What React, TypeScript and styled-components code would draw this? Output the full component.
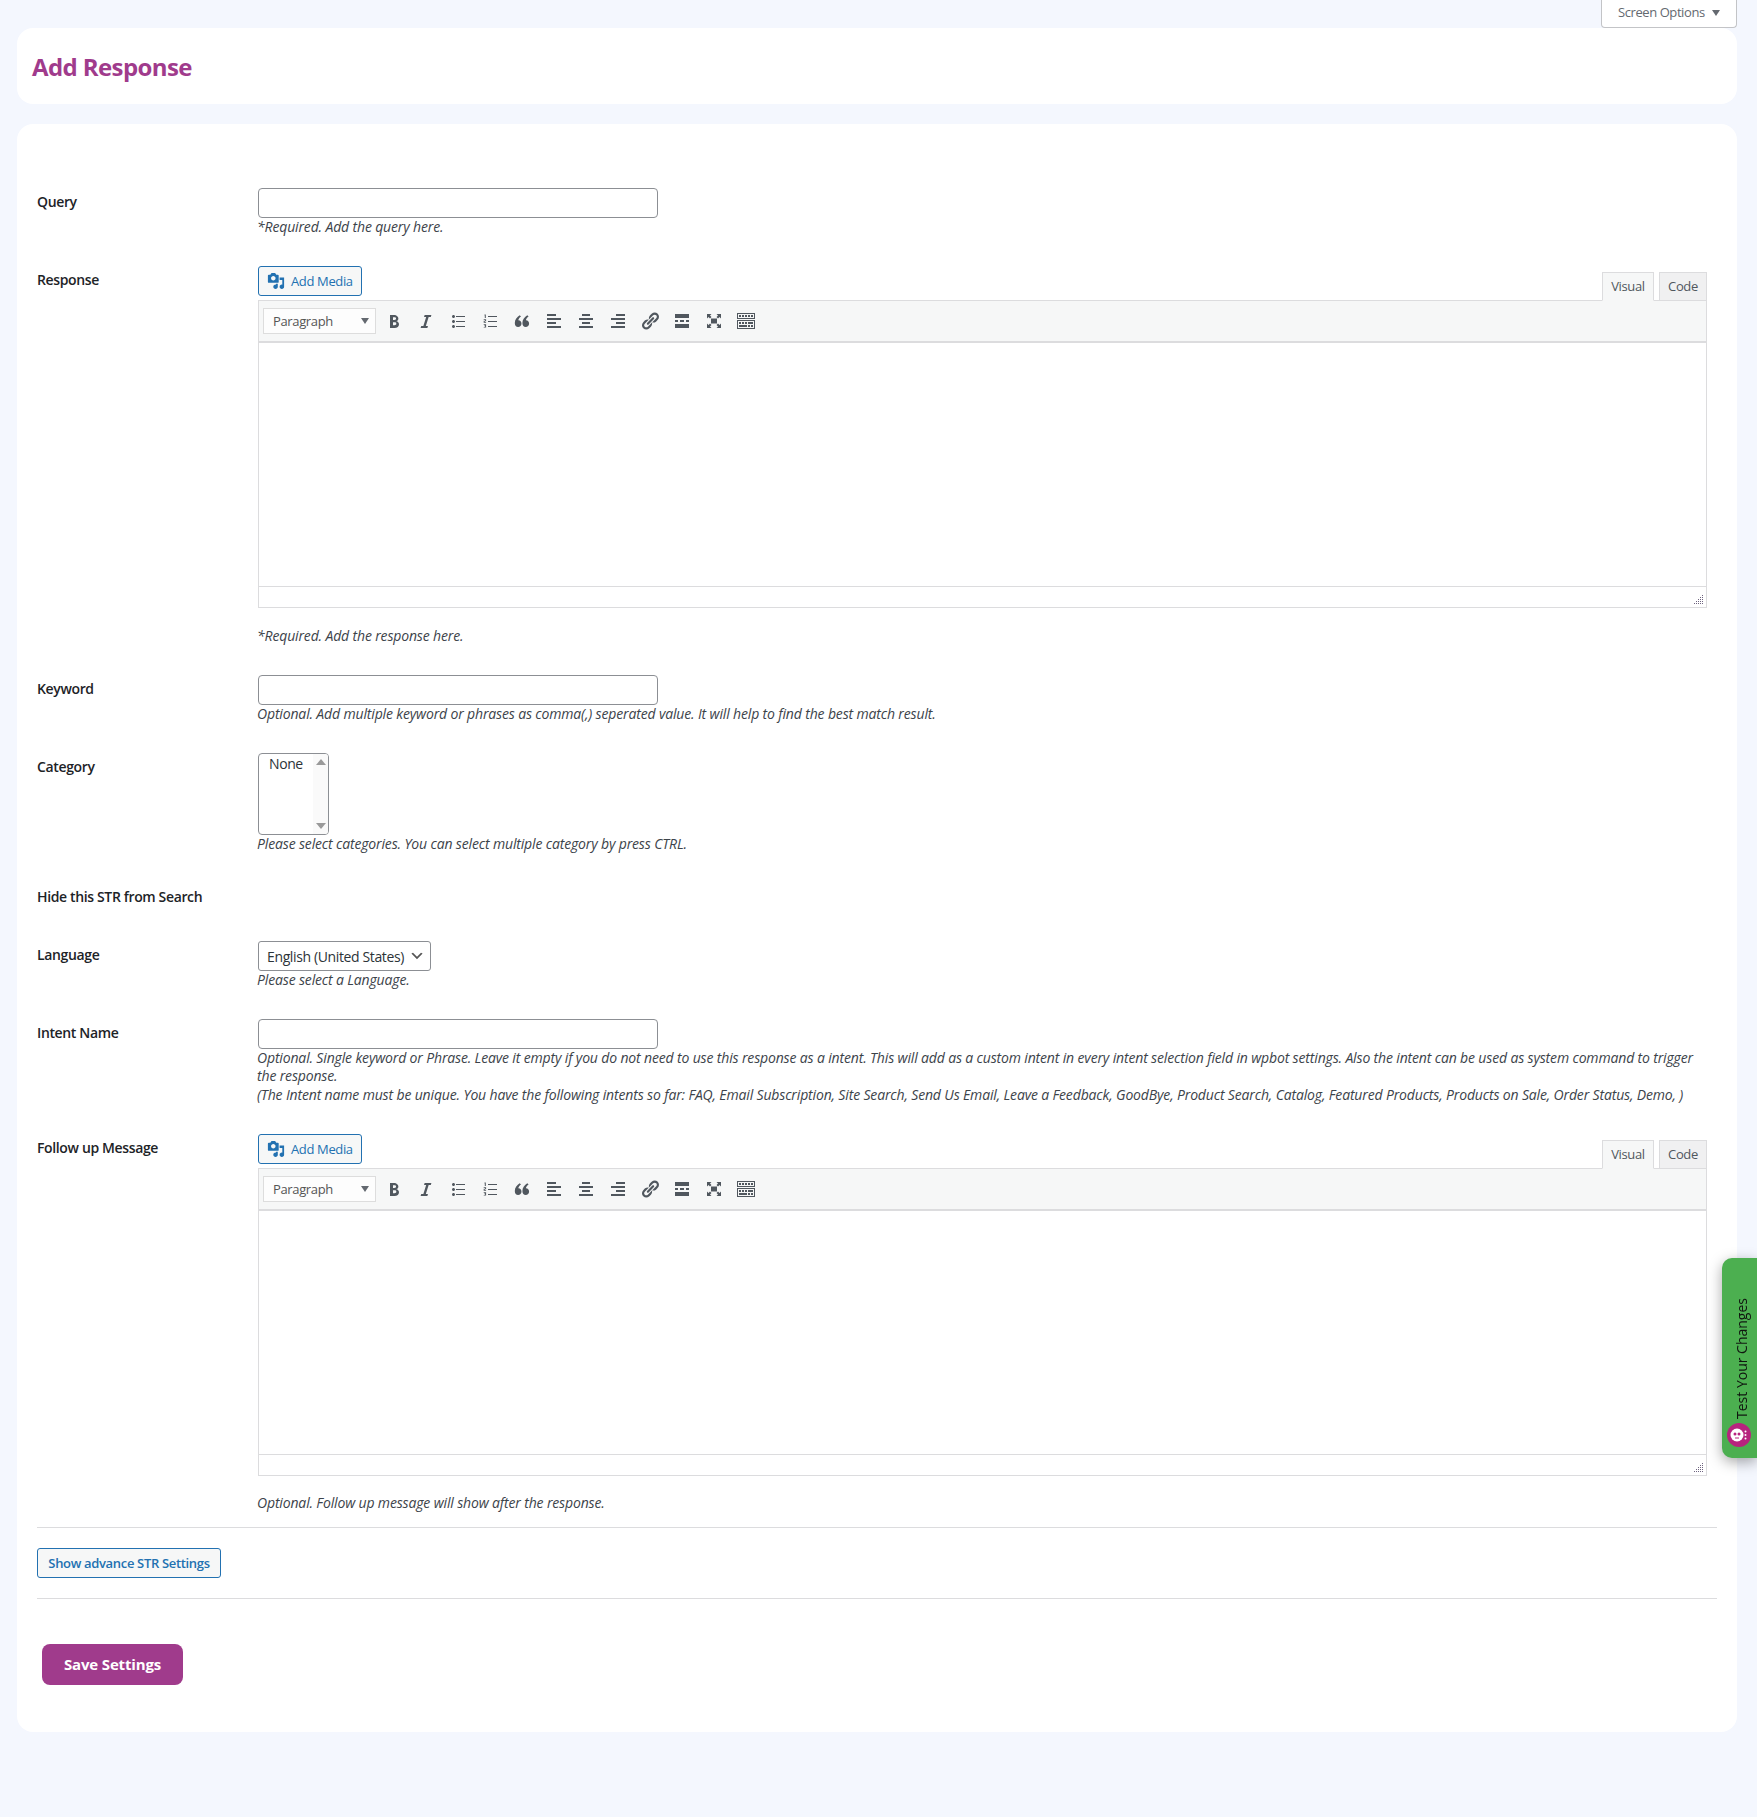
import React from 'react';
import styled, { createGlobalStyle } from 'styled-components';

const uiFont = `"Open Sans", "Noto Sans", sans-serif`;

const GlobalStyle = createGlobalStyle`
  html, body {
    margin: 0;
    background: #f4f7fe;
  }
  body {
    font-family: ${uiFont};
    font-size: 13px;
    line-height: 1.4;
    color: #3c434a;
  }
  * {
    box-sizing: border-box;
  }
`;

const Page = styled.div`
  position: relative;
  min-height: 1817px;
  padding: 0 20px 85px 17px;
  overflow: hidden;
`;

const TopBar = styled.div`
  display: flex;
  justify-content: flex-end;
  height: 28px;
`;

const ScreenOptions = styled.button`
  position: relative;
  z-index: 1;
  display: flex;
  align-items: center;
  gap: 7px;
  width: 136px;
  height: 28px;
  padding: 0 0 2px 16px;
  border: 1px solid #c3c4c7;
  border-top: 0;
  border-radius: 0 0 4px 4px;
  background: #fff;
  color: #646970;
  font: 13px/1 ${uiFont};
  letter-spacing: -0.42px;
`;

const DownArrow = styled.span`
  width: 0;
  height: 0;
  border-left: 4px solid transparent;
  border-right: 4px solid transparent;
  border-top: 6px solid #646970;
`;

const TitleCard = styled.div`
  height: 76px;
  padding: 2px 15px 0;
  display: flex;
  align-items: center;
  background: #fff;
  border-radius: 16px;
`;

const Title = styled.h1`
  margin: 0;
  color: #a03b8c;
  font: 700 24px/1.2 ${uiFont};
  letter-spacing: -0.6px;
`;

const FormCard = styled.div`
  margin-top: 20px;
  padding: 49px 20px 47px;
  background: #fff;
  border-radius: 16px;
`;

const Row = styled.div`
  display: grid;
  grid-template-columns: 221px 1fr;
`;

const Label = styled.div`
  padding: 20px 0;
  color: #1d2327;
  font-size: 14px;
  font-weight: 600;
  line-height: 18px;
  letter-spacing: -0.36px;
`;

const Field = styled.div`
  padding: 15px 10px 15px 0;
  min-width: 0;
`;

const TextInput = styled.input`
  display: block;
  width: 400px;
  height: 30px;
  border: 1px solid #8c8f94;
  border-radius: 4px;
  background: #fff;
`;

const Help = styled.div<{ $gap?: number; $leading?: number }>`
  margin-top: ${p => p.$gap ?? 0}px;
  margin-left: -1px;
  font-size: 14px;
  font-style: italic;
  line-height: ${p => p.$leading ?? 18}px;
  letter-spacing: -0.15px;
  color: #3c434a;
`;

const EditorHead = styled.div`
  display: flex;
  justify-content: space-between;
  align-items: flex-end;
  height: 34px;
`;

const AddMedia = styled.button`
  display: flex;
  align-items: center;
  gap: 6px;
  align-self: flex-start;
  width: 104px;
  height: 30px;
  padding: 0 0 0 8px;
  border: 1px solid #2271b1;
  border-radius: 3px;
  background: #f6f7f7;
  color: #2271b1;
  font: 13px/1 ${uiFont};
  letter-spacing: -0.36px;
  svg {
    flex: none;
    fill: #2271b1;
  }
`;

const Tabs = styled.div`
  display: flex;
  gap: 5px;
  position: relative;
  top: 1px;
`;

const Tab = styled.div<{ $active?: boolean }>`
  display: flex;
  align-items: center;
  justify-content: center;
  width: ${p => (p.$active ? 52 : 48)}px;
  height: 29px;
  border: 1px solid #dcdcde;
  border-bottom-color: ${p => (p.$active ? '#f6f7f7' : '#dcdcde')};
  background: ${p => (p.$active ? '#f6f7f7' : '#f0f0f1')};
  color: #50575e;
  font-size: 13px;
  letter-spacing: -0.36px;
`;

const EditorBox = styled.div`
  border: 1px solid #dcdcde;
  background: #fff;
`;

const Toolbar = styled.div`
  display: flex;
  align-items: center;
  height: 42px;
  padding: 0 0 0 4px;
  background: #f6f7f7;
  border-bottom: 2px solid #dcdcde;
`;

const FormatSelect = styled.div`
  display: flex;
  align-items: center;
  justify-content: space-between;
  width: 113px;
  height: 26px;
  margin-right: 2px;
  padding: 0 6px 0 9px;
  border: 1px solid #dddddd;
  background: #fdfdfd;
  color: #555;
  font-size: 13px;
  letter-spacing: -0.36px;
`;

const ToolButton = styled.div`
  display: flex;
  align-items: center;
  justify-content: center;
  width: 32px;
  height: 30px;
  svg {
    fill: #50575e;
  }
`;

const EditArea = styled.div`
  height: 244px;
  border-bottom: 1px solid #dcdcde;
`;

const StatusBar = styled.div`
  display: flex;
  justify-content: flex-end;
  align-items: flex-end;
  height: 20px;
  padding: 0 3px 3px 0;
`;

const Listbox = styled.div`
  display: flex;
  width: 71px;
  height: 82px;
  border: 1px solid #8c8f94;
  border-radius: 4px;
  overflow: hidden;
  background: #fff;
`;

const ListOptions = styled.div`
  flex: 1;
  padding: 1px 0 0 10px;
  font-size: 14px;
  line-height: 17px;
  letter-spacing: -0.4px;
  color: #2c3338;
`;

const Scrollbar = styled.div`
  display: flex;
  flex-direction: column;
  justify-content: space-between;
  align-items: center;
  width: 15px;
  padding: 5px 0;
  background: #fafafa;
`;

const ScrollArrow = styled.span<{ $up?: boolean }>`
  width: 0;
  height: 0;
  border-left: 5px solid transparent;
  border-right: 5px solid transparent;
  ${p => (p.$up ? 'border-bottom: 6px solid #9a9a9a;' : 'border-top: 6px solid #9a9a9a;')}
`;

const LanguageSelect = styled.select`
  display: block;
  width: 173px;
  height: 30px;
  padding: 0 24px 0 8px;
  border: 1px solid #8c8f94;
  border-radius: 3px;
  appearance: none;
  background: #fff url("data:image/svg+xml,%3Csvg xmlns='http://www.w3.org/2000/svg' width='20' height='20'%3E%3Cpath d='M5 6l5 5 5-5 2 1-7 7-7-7z' fill='%23555'/%3E%3C/svg%3E") no-repeat right 5px top 6px / 16px 16px;
  color: #2c3338;
  font: 14px ${uiFont};
  letter-spacing: -0.37px;
`;

const Divider = styled.hr`
  margin: 0;
  border: 0;
  border-top: 1px solid #dcdcde;
`;

const AdvanceButton = styled.button`
  display: block;
  width: 184px;
  height: 30px;
  margin: 20px 0;
  padding: 0;
  border: 1px solid #2271b1;
  border-radius: 3px;
  background: #f6f7f7;
  color: #2271b1;
  font: 600 13px/1 ${uiFont};
  letter-spacing: -0.33px;
`;

const SaveButton = styled.button`
  display: block;
  width: 141px;
  height: 41px;
  margin: 45px 0 0 5px;
  padding: 0;
  border: 0;
  border-radius: 8px;
  background: #a03b8c;
  color: #fff;
  font: 700 15px/1 ${uiFont};
  letter-spacing: -0.15px;
`;

const TestTab = styled.div`
  position: fixed;
  top: 1258px;
  right: 0;
  display: flex;
  flex-direction: column;
  justify-content: flex-end;
  align-items: flex-start;
  gap: 4px;
  width: 35px;
  height: 200px;
  padding: 0 0 11px 5px;
  background: #4caf50;
  border-radius: 10px 0 0 10px;
  box-shadow: 0 4px 14px rgba(0, 0, 0, 0.35);
`;

const TestLabel = styled.span`
  margin-left: 5px;
  writing-mode: vertical-rl;
  transform: rotate(180deg);
  color: #10150f;
  font-size: 14px;
  line-height: 19px;
  white-space: nowrap;
`;

const Icon = ({ d, size = 20 }: { d: string; size?: number }) => (
  <svg width={size} height={size} viewBox="0 0 20 20" aria-hidden="true">
    <path d={d} />
  </svg>
);

const toolIcons = [
  'M6 4v13h4.54c1.37 0 2.46-.33 3.26-1 .8-.66 1.2-1.58 1.2-2.77 0-.84-.23-1.51-.8-2.01-.4-.49-1-.82-1.76-.98v-.06c.6-.14 1.07-.43 1.41-.87.34-.45.51-1.02.51-1.71 0-1.03-.38-1.82-1.14-2.33C12.48 4.27 11.34 4 9.82 4H6zm3 2.2h1.13c.68 0 1.17.09 1.48.3.3.2.45.53.45.99 0 .49-.14.85-.42 1.08-.28.22-.73.33-1.35.33H9V6.2zm0 5h1.37c.65 0 1.14.12 1.46.37.32.24.49.6.49 1.08 0 .51-.17.89-.5 1.14-.33.25-.82.38-1.47.38H9v-3z',
  'M14.78 6h-2.13l-2.8 9h2.12l-.62 2H4.6l.62-2h2.14l2.8-9H8.03l.62-2h6.75z',
  'M5.5 7C4.67 7 4 6.33 4 5.5 4 4.68 4.67 4 5.5 4 6.32 4 7 4.68 7 5.5 7 6.33 6.32 7 5.5 7zM8 5h9v1H8V5zm-2.5 7c-.83 0-1.5-.67-1.5-1.5C4 9.68 4.67 9 5.5 9c.82 0 1.5.68 1.5 1.5 0 .83-.68 1.5-1.5 1.5zM8 10h9v1H8v-1zm-2.5 7c-.83 0-1.5-.67-1.5-1.5 0-.82.67-1.5 1.5-1.5.82 0 1.5.68 1.5 1.5 0 .83-.68 1.5-1.5 1.5zM8 15h9v1H8v-1z',
  'M8 5h9v1H8V5zm0 5h9v1H8v-1zm0 5h9v1H8v-1zM4.5 3.5h1.3v3.4h-1V4.4h-.3zM3.7 8.2h2.4v2.1H4.7v.6h1.4v.8H3.7V9.7h1.4V9H3.7zM3.7 13.2h2.4v3.4H3.7v-.7h1.4v-.7h-.9v-.6h.9v-.7H3.7z',
  'M9.5 12.5c0-2-1.4-3.4-3.2-3.3.2-1.3 1.2-2.6 2.7-3.7L7.7 4.3C5 6 2.8 8.7 2.8 12c0 2.4 1.3 4 3.3 4 1.9 0 3.4-1.5 3.4-3.5zM17.1 12.5c0-2-1.4-3.4-3.2-3.3.2-1.3 1.2-2.6 2.7-3.7l-1.3-1.2c-2.7 1.7-4.9 4.4-4.9 7.7 0 2.4 1.3 4 3.3 4 1.9 0 3.4-1.5 3.4-3.5z',
  'M12 5V3H3v2h9zm5 4V7H3v2h14zm-5 4v-2H3v2h9zm5 4v-2H3v2h14z',
  'M14 5V3H6v2h8zm3 4V7H3v2h14zm-3 4v-2H6v2h8zm3 4v-2H3v2h14z',
  'M17 5V3H8v2h9zm0 4V7H3v2h14zm0 4v-2H8v2h9zm0 4v-2H3v2h14z',
  'M17.74 2.76c1.68 1.69 1.68 4.41 0 6.1l-1.53 1.52c-1.12 1.12-2.7 1.47-4.14 1.09l2.62-2.61.76-.77.76-.76c.84-.84.84-2.2 0-3.04-.84-.85-2.2-.85-3.04 0l-.77.76-3.38 3.38c-.37-1.44-.02-3.02 1.1-4.14l1.52-1.53c1.69-1.68 4.42-1.68 6.1 0zM8.59 13.43l5.34-5.34c.42-.42.42-1.1 0-1.52-.44-.43-1.13-.39-1.53 0l-5.33 5.34c-.42.42-.42 1.1 0 1.52.44.43 1.13.39 1.52 0zm-.76 2.29l4.14-4.15c.38 1.44.03 3.02-1.09 4.14l-1.52 1.53c-1.69 1.68-4.41 1.68-6.1 0-1.68-1.68-1.68-4.42 0-6.1l1.53-1.52c1.12-1.12 2.7-1.47 4.14-1.1l-4.14 4.15c-.85.84-.85 2.2 0 3.05.84.84 2.2.84 3.04 0z',
  'M17 7V3H3v4h14zM6 11V9H3v2h3zm6 0V9H8v2h4zm5 0V9h-3v2h3zm0 6v-4H3v4h14z',
  'M7 7.5h6v5H7zM3 3h4.5L6 4.5 7.5 6 6 7.5 4.5 6 3 7.5zM17 3v4.5L15.5 6 14 7.5 12.5 6 14 4.5 12.5 3zM3 17v-4.5L4.5 14 6 12.5 7.5 14 6 15.5 7.5 17zM17 17h-4.5l1.5-1.5-1.5-1.5 1.5-1.5 1.5 1.5 1.5-1.5z',
  'M19 2v6H1V2h18zm-1 5V3H2v4h16zM5 4v2H3V4h2zm3 0v2H6V4h2zm3 0v2H9V4h2zm3 0v2h-2V4h2zm3 0v2h-2V4h2zm2 5v9H1V9h18zm-1 8v-7H2v7h16zM5 11v2H3v-2h2zm3 0v2H6v-2h2zm3 0v2H9v-2h2zm6 0v2h-5v-2h5zm-6 3v2H3v-2h8zm3 0v2h-2v-2h2zm3 0v2h-2v-2h2z',
];

const mediaIcon =
  'M13 11V4c0-.55-.45-1-1-1h-1.67L9 1H5L3.67 3H2c-.55 0-1 .45-1 1v7c0 .55.45 1 1 1h10c.55 0 1-.45 1-1zM7 4.5c1.38 0 2.5 1.12 2.5 2.5S8.38 9.5 7 9.5 4.5 8.38 4.5 7 5.62 4.5 7 4.5zM14 6h5v10.5c0 1.38-1.12 2.5-2.5 2.5S14 17.88 14 16.5s1.12-2.5 2.5-2.5c.17 0 .34.02.5.05V9h-3V6zm-4 8.05V13h2v3.5c0 1.38-1.12 2.5-2.5 2.5S7 17.88 7 16.5 8.12 14 9.5 14c.17 0 .34.02.5.05z';

const gripDots = [
  [8, 0],
  [6, 2],
  [8, 2],
  [4, 4],
  [6, 4],
  [8, 4],
  [2, 6],
  [4, 6],
  [6, 6],
  [8, 6],
  [0, 8],
  [2, 8],
  [4, 8],
  [6, 8],
  [8, 8],
];

const ResizeGrip = () => (
  <svg width="9" height="9" viewBox="0 0 9 9" fill="#6f6480" aria-hidden="true">
    {gripDots.map(([x, y]) => (
      <rect key={`${x}-${y}`} x={x} y={y} width="1" height="1" />
    ))}
  </svg>
);

const BotLogo = () => (
  <svg width="24" height="24" viewBox="0 0 24 24" aria-hidden="true">
    <circle cx="12" cy="12" r="12" fill="#b7247e" />
    <circle cx="10" cy="12" r="6.5" fill="#fff" />
    <circle cx="8" cy="11" r="1.5" fill="#b7247e" />
    <circle cx="12" cy="11" r="1.5" fill="#b7247e" />
    <rect x="8" y="14.5" width="4" height="1" fill="#b7247e" />
    <circle cx="18.5" cy="8.5" r="1" fill="#fff" />
    <circle cx="18.5" cy="12" r="1" fill="#fff" />
    <circle cx="18.5" cy="15.5" r="1" fill="#fff" />
  </svg>
);

const Editor = () => (
  <>
    <EditorHead>
      <AddMedia type="button">
        <Icon d={mediaIcon} size={18} />
        Add Media
      </AddMedia>
      <Tabs>
        <Tab $active>Visual</Tab>
        <Tab>Code</Tab>
      </Tabs>
    </EditorHead>
    <EditorBox>
      <Toolbar>
        <FormatSelect>
          Paragraph
          <DownArrow />
        </FormatSelect>
        {toolIcons.map(d => (
          <ToolButton key={d}>
            <Icon d={d} />
          </ToolButton>
        ))}
      </Toolbar>
      <EditArea />
      <StatusBar>
        <ResizeGrip />
      </StatusBar>
    </EditorBox>
  </>
);

const App = () => (
  <Page>
    <GlobalStyle />
    <TopBar>
      <ScreenOptions type="button">
        Screen Options
        <DownArrow />
      </ScreenOptions>
    </TopBar>
    <TitleCard>
      <Title>Add Response</Title>
    </TitleCard>
    <FormCard>
      <Row>
        <Label>Query</Label>
        <Field>
          <TextInput type="text" />
          <Help>*Required. Add the query here.</Help>
        </Field>
      </Row>
      <Row>
        <Label>Response</Label>
        <Field>
          <Editor />
          <Help $gap={19}>*Required. Add the response here.</Help>
        </Field>
      </Row>
      <Row>
        <Label>Keyword</Label>
        <Field>
          <TextInput type="text" />
          <Help>
            Optional. Add multiple keyword or phrases as comma(,) seperated value. It will help to find the best match
            result.
          </Help>
        </Field>
      </Row>
      <Row>
        <Label>Category</Label>
        <Field>
          <Listbox>
            <ListOptions>None</ListOptions>
            <Scrollbar>
              <ScrollArrow $up />
              <ScrollArrow />
            </Scrollbar>
          </Listbox>
          <Help>Please select categories. You can select multiple category by press CTRL.</Help>
        </Field>
      </Row>
      <Row>
        <Label>Hide this STR from Search</Label>
        <Field />
      </Row>
      <Row>
        <Label>Language</Label>
        <Field>
          <LanguageSelect defaultValue="en">
            <option value="en">English (United States)</option>
          </LanguageSelect>
          <Help>Please select a Language.</Help>
        </Field>
      </Row>
      <Row>
        <Label>Intent Name</Label>
        <Field>
          <TextInput type="text" />
          <Help $leading={18.34}>
            Optional. Single keyword or Phrase. Leave it empty if you do not need to use this response as a intent. This
            will add as a custom intent in every intent selection field in wpbot settings. Also the intent can be used as
            system command to trigger the response.
            <br />
            (The Intent name must be unique. You have the following intents so far: FAQ, Email Subscription, Site Search,
            Send Us Email, Leave a Feedback, GoodBye, Product Search, Catalog, Featured Products, Products on Sale, Order
            Status, Demo, )
          </Help>
        </Field>
      </Row>
      <Row>
        <Label>Follow up Message</Label>
        <Field>
          <Editor />
          <Help $gap={18}>Optional. Follow up message will show after the response.</Help>
        </Field>
      </Row>
      <Divider />
      <AdvanceButton type="button">Show advance STR Settings</AdvanceButton>
      <Divider />
      <SaveButton type="button">Save Settings</SaveButton>
    </FormCard>
    <TestTab>
      <TestLabel>Test Your Changes</TestLabel>
      <BotLogo />
    </TestTab>
  </Page>
);

export default App;
